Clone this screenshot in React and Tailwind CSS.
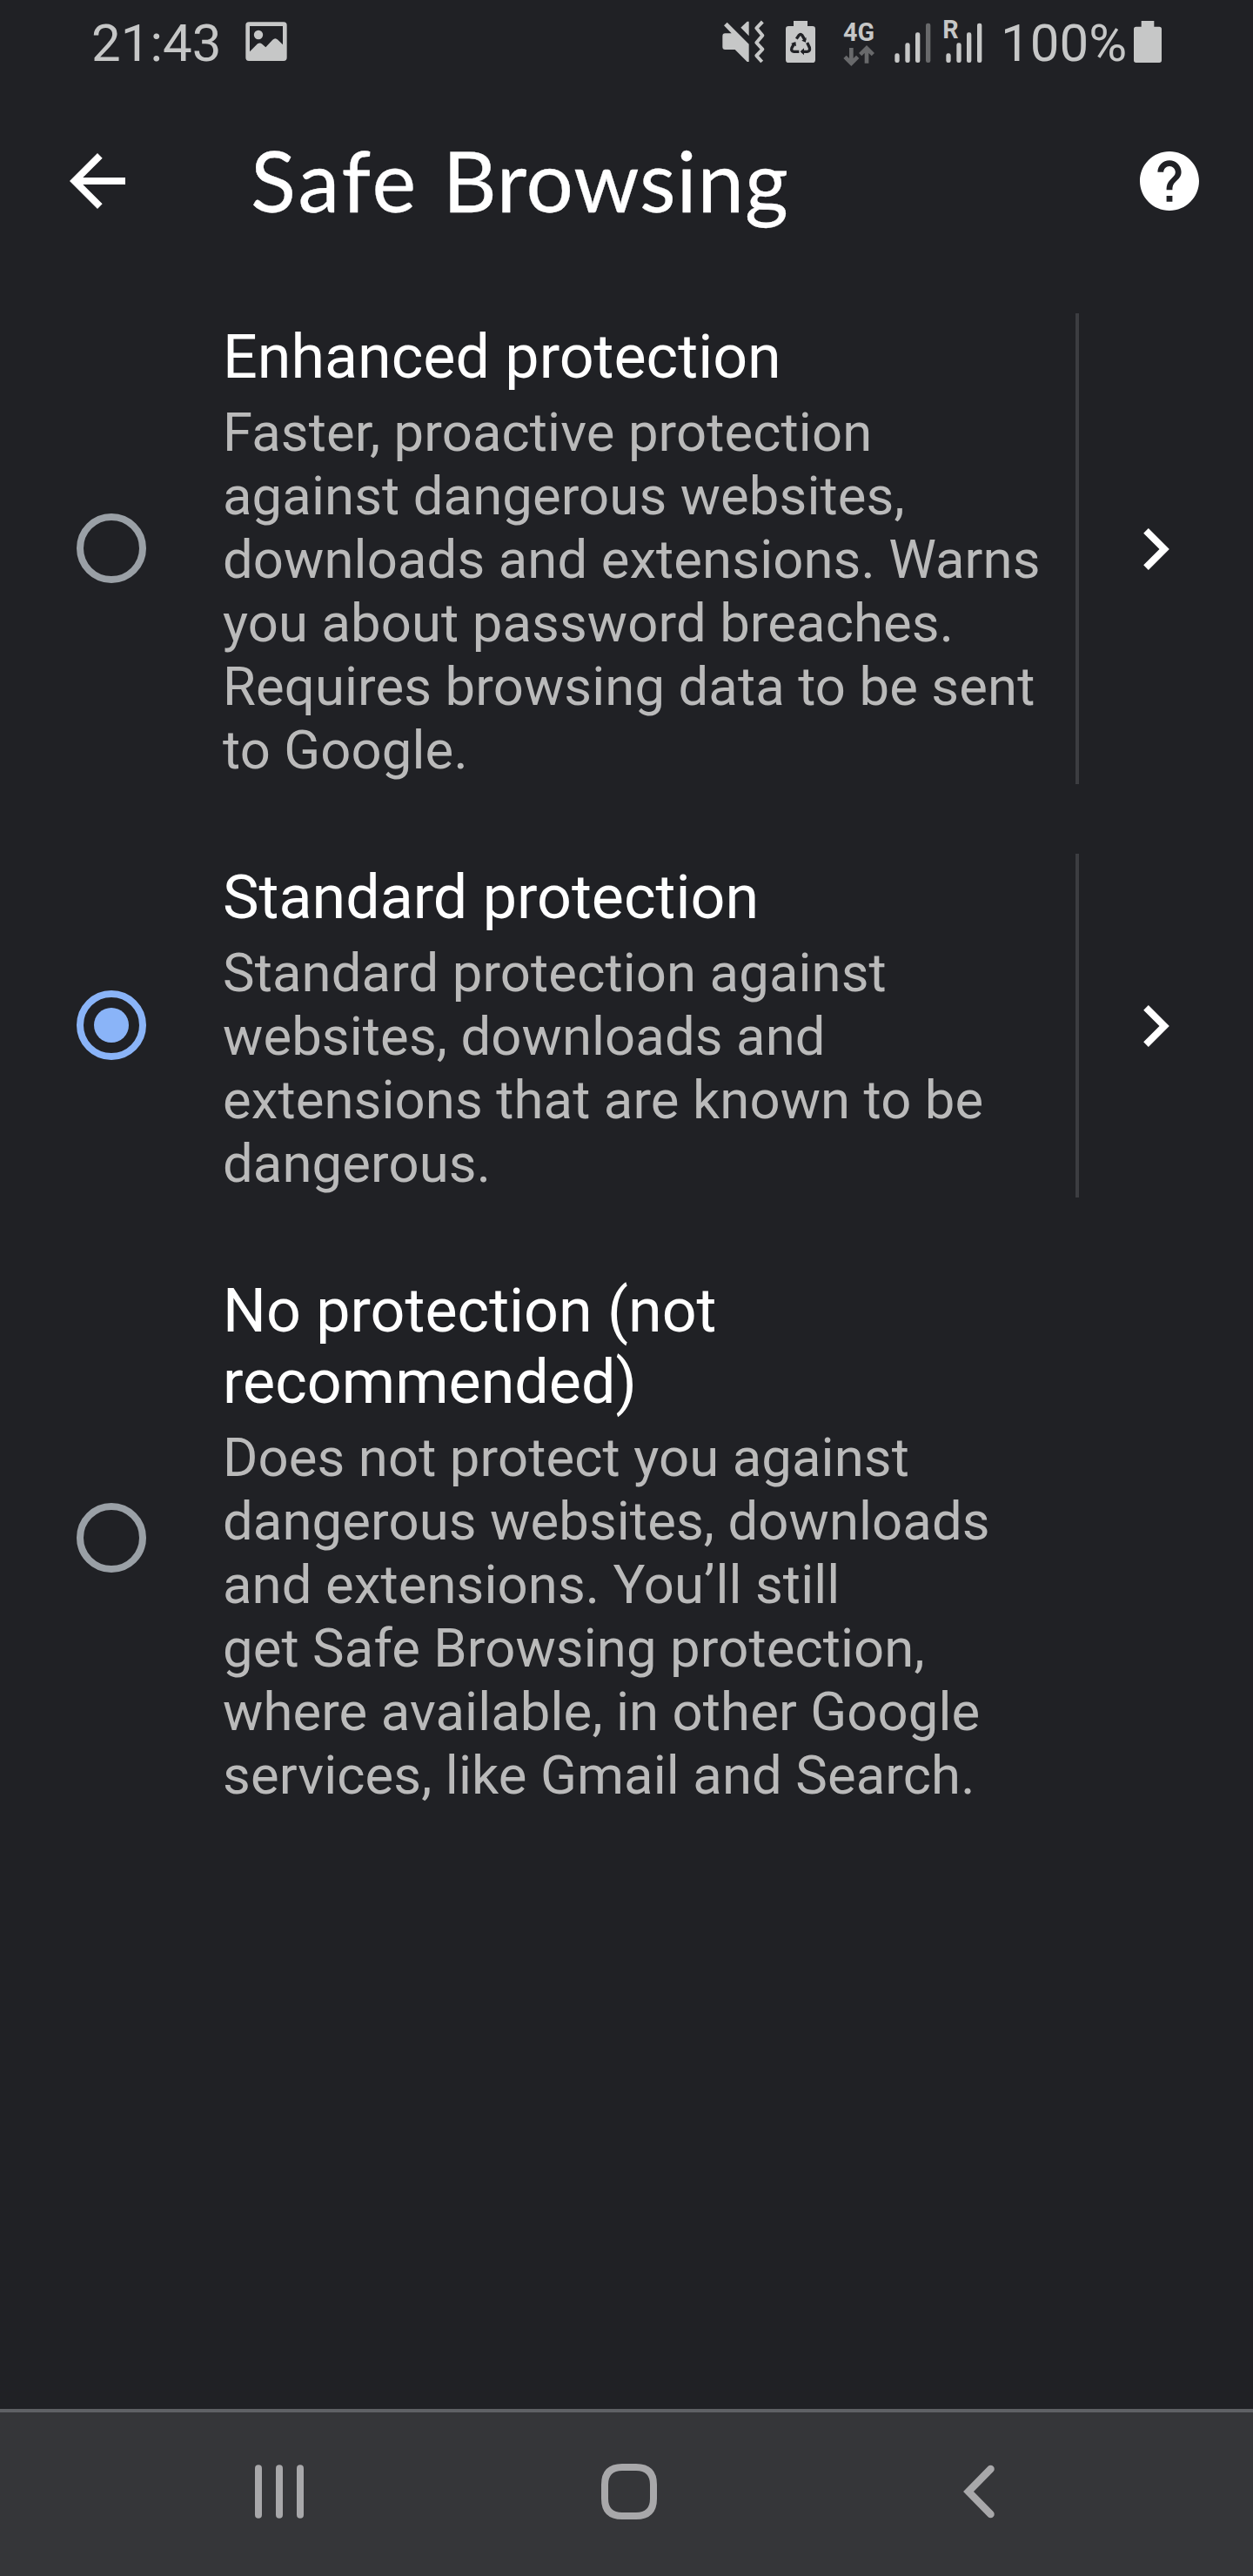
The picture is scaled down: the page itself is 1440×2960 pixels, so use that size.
import React from "react";

const GREY = "#c6c7c7";

const OPTIONS = [
  {
    title: ["Enhanced protection"],
    lines: [
      "Faster, proactive protection",
      "against dangerous websites,",
      "downloads and extensions. Warns",
      "you about password breaches.",
      "Requires browsing data to be sent",
      "to Google.",
    ],
    more: true,
  },
  {
    title: ["Standard protection"],
    lines: [
      "Standard protection against",
      "websites, downloads and",
      "extensions that are known to be",
      "dangerous.",
    ],
    more: true,
    selected: true,
  },
  {
    title: ["No protection (not", "recommended)"],
    lines: [
      "Does not protect you against",
      "dangerous websites, downloads",
      "and extensions. You’ll still",
      "get Safe Browsing protection,",
      "where available, in other Google",
      "services, like Gmail and Search.",
    ],
  },
];

function StatusBar() {
  return (
    <div className="flex h-[100px] shrink-0 items-start pl-[105px] leading-[100px] text-[#c6c7c7]">
      <span className="w-[177px] text-[60px]">21:43</span>
      <svg className="h-[100px] w-[48px]" viewBox="606 0 144 300" fill={GREY}>
        <path
          fillRule="evenodd"
          d="M618 76H738Q749 76 749 87V199Q749 210 738 210H618Q607 210 607 199V87Q607 76 618 76ZM621 90V178L648 151Q656 145 664 152L676 163L700 137Q709 128 718 137L735 154V90Z"
        />
        <circle cx="651" cy="120" r="15.5" />
      </svg>
      <svg className="ml-[500px] h-[100px] w-[50px]" viewBox="60 0 150 300" fill={GREY}>
        <path d="M77 77L152 152V213H146L104 171H70Q61 171 61 162V125Q61 115 70 115H92L66 88ZM124 95L146 74H152V124Z" />
        <path d="M199 75L178 97L199 122L178 147L199 170L178 192L197 213" fill="none" stroke={GREY} strokeWidth="12" strokeLinejoin="round" />
      </svg>
      <svg className="ml-[23px] h-[100px] w-[34px]" viewBox="279 0 102 300" fill={GREY}>
        <path d="M306 72H354V90H371Q381 90 381 100V206Q381 216 371 216H289Q279 216 279 206V100Q279 90 289 90H306Z" />
        <g fill="none" stroke="#202125" strokeWidth="10">
          <path d="M316 134L325 121Q330 115 335 121L346 139" />
          <path d="M353 147L361 164Q364 177 353 178H333" />
          <path d="M325 178H307Q296 177 300 165L309 149" />
        </g>
        <path d="M350 129L348 146L334 140ZM342 166V190L329 178ZM297 150L313 144L315 160Z" fill="#202125" />
      </svg>
      <svg className="ml-[31px] h-[100px] w-[40px]" viewBox="475 0 120 300" fill={GREY}>
        <text x="478" y="140" fontFamily="Roboto" fontWeight="700" fontSize="88" textLength="108" lengthAdjust="spacingAndGlyphs">4G</text>
        <g fill="none" stroke="#68696b" strokeWidth="14">
          <path d="M506 165V216M484 196L506 218L528 196" />
          <path d="M559 218V168M537 188L559 166L581 188" />
        </g>
      </svg>
      <svg className="ml-[19px] h-[100px] w-[44px]" viewBox="650 0 132 300" fill={GREY}>
        <rect x="654" y="184" width="16" height="32" rx="7" />
        <rect x="690" y="148" width="16" height="68" rx="7" />
        <rect x="725" y="112" width="16" height="104" rx="7" />
        <rect x="761" y="80" width="16" height="136" rx="7" fill="#68696b" />
      </svg>
      <svg className="ml-[12px] h-[100px] w-[48px]" viewBox="38 0 144 300" fill={GREY}>
        <text x="39" y="132" fontFamily="Roboto" fontWeight="700" fontSize="86">R</text>
        <rect x="51" y="184" width="16" height="32" rx="7" />
        <rect x="87" y="148" width="16" height="68" rx="7" />
        <rect x="122" y="112" width="16" height="104" rx="7" />
        <rect x="158" y="80" width="16" height="136" rx="7" />
      </svg>
      <span className="ml-[19px] w-[153px] text-[60px]">100%</span>
      <svg className="h-[100px] w-[34px]" viewBox="699 0 102 300" fill={GREY}>
        <path d="M725 72H769V92H787Q795 92 795 100V208Q795 216 787 216H707Q699 216 699 208V100Q699 92 707 92H725Z" />
      </svg>
    </div>
  );
}

function AppBar() {
  return (
    <header className="flex h-[216px] shrink-0 items-center pl-[80px] pr-[62px] text-white">
      <svg className="h-[64px] w-[64px]" viewBox="4 4 16 16" fill="currentColor">
        <path d="M20 11H7.83l5.59-5.59L12 4l-8 8 8 8 1.410-1.410L7.830 13H20v-2z" />
      </svg>
      <h1 className="ml-[144px] flex-1 whitespace-nowrap pb-[2px] font-['Lato',sans-serif] text-[96px] leading-[120px] [-webkit-text-stroke:0.3px_white]">
        <span className="tracking-[3px]">Safe </span>
        <span className="tracking-[0.9px]">Browsing</span>
      </h1>
      <svg className="h-[68px] w-[68px]" viewBox="2 2 20 20" fill="currentColor">
        <path d="M12 2C6.480 2 2 6.480 2 12s4.480 10 10 10 10-4.480 10-10S17.520 2 12 2zm1 17h-2v-2h2v2zm2.070-7.750l-.9.920C13.450 12.900 13 13.500 13 15h-2v-.5c0-1.100.450-2.100 1.170-2.830l1.240-1.260c.370-.360.590-.860.590-1.410 0-1.100-.9-2-2-2s-2 .9-2 2H8c0-2.210 1.790-4 4-4s4 1.790 4 4c0 .880-.360 1.680-.930 2.250z" />
      </svg>
    </header>
  );
}

function Radio({ selected }) {
  return selected ? (
    <span className="flex size-[80px] items-center justify-center rounded-full border-8 border-[#8ab4f8]">
      <span className="size-[40px] rounded-full bg-[#8ab4f8]" />
    </span>
  ) : (
    <span className="size-[80px] rounded-full border-8 border-[#9aa0a6]" />
  );
}

function Option({ title, lines, more, selected }) {
  return (
    <div className="flex items-stretch">
      <div className="flex w-[256px] shrink-0 items-center pb-px pl-[88px]">
        <Radio selected={selected} />
      </div>
      <div className="w-[980px] whitespace-nowrap pb-[2px] pt-[9px]">
        <div className="text-[70px] leading-[82px] text-white">
          {title.map((t) => (
            <div key={t}>{t}</div>
          ))}
        </div>
        <div className="mt-[10px] text-[61.6px] leading-[73px] tracking-[0.11px] text-[#bababa]">
          {lines.map((t) => (
            <div key={t}>{t}</div>
          ))}
        </div>
      </div>
      {more && (
        <div className="flex flex-1 items-center border-l-4 border-[#3c3d41] pl-[74px] text-white">
          <svg className="h-[48px] w-[30px]" viewBox="8.590 6 7.410 12" fill="currentColor">
            <path d="M10 6L8.590 7.410 13.170 12l-4.580 4.590L10 18l6-6z" />
          </svg>
        </div>
      )}
    </div>
  );
}

function NavBar() {
  return (
    <nav className="flex h-[192px] shrink-0 items-start border-t-4 border-[#5f6165] bg-[#353639] pl-[292px] pt-[58px] text-[#a8a8aa]">
      <svg className="h-[66px] w-[60px]" viewBox="0 0 60 66" fill="currentColor">
        <rect x="1" y="2.300" width="8" height="61.400" rx="4" />
        <rect x="25" y="2.300" width="8" height="61.400" rx="4" />
        <rect x="49" y="2.300" width="8" height="61.400" rx="4" />
      </svg>
      <svg className="ml-[338px] h-[66px] w-[66px]" viewBox="0 0 66 66" fill="none" stroke="currentColor" strokeWidth="8">
        <path d="M25 5H41Q61 5 61 25V41Q61 61 41 61H25Q5 61 5 41V25Q5 5 25 5Z" />
      </svg>
      <svg className="ml-[350px] h-[66px] w-[40px]" viewBox="0 0 40 66" fill="none" stroke="currentColor" strokeWidth="8.500" strokeLinecap="round">
        <path d="M32.500 7L7 33L32.500 59" />
      </svg>
    </nav>
  );
}

export default function App() {
  return (
    <div className="flex h-[2960px] w-[1440px] flex-col overflow-hidden bg-[#202125] font-['Roboto',sans-serif]">
      <StatusBar />
      <AppBar />
      <main className="flex flex-1 flex-col gap-[80px] pt-[44px]">
        {OPTIONS.map((o) => (
          <Option key={o.title[0]} {...o} />
        ))}
      </main>
      <NavBar />
    </div>
  );
}
